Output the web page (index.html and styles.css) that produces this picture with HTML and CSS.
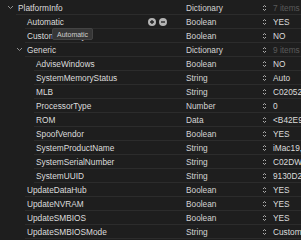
FILE: index.html
```html
<!DOCTYPE html>
<html>
<head>
<meta charset="utf-8">
<link rel="stylesheet" href="styles.css">
</head>
<body>
<div class="outline">
  <div class="row l0">
    <div class="key"><svg class="twist" width="7" height="5" viewBox="0 0 7 5"><path d="M1 1 L3.5 3.5 L6 1" fill="none" stroke="#8e8e8e" stroke-width="1"/></svg><span>PlatformInfo</span></div>
    <div class="type">Dictionary</div>
    <div class="val"><svg class="step" width="5" height="8" viewBox="0 0 5 8"><path d="M1 3 L2.5 1.5 L4 3 M1 5 L2.5 6.5 L4 5" fill="none" stroke="#b0b0b0" stroke-width="1"/></svg><span class="dim">7 items</span></div>
  </div>
  <div class="row l1">
    <div class="key"><span>Automatic</span>
      <span class="btns">
        <svg width="8" height="8" viewBox="0 0 8 8"><circle cx="4" cy="4" r="4" fill="#b4b4b4"/><path d="M2 4 H6 M4 2 V6" stroke="#1e1e1e" stroke-width="1.3"/></svg>
        <svg width="8" height="8" viewBox="0 0 8 8"><circle cx="4" cy="4" r="4" fill="#b4b4b4"/><path d="M2 4 H6" stroke="#1e1e1e" stroke-width="1.3"/></svg>
      </span>
    </div>
    <div class="type">Boolean</div>
    <div class="val"><svg class="step" width="5" height="8" viewBox="0 0 5 8"><path d="M1 3 L2.5 1.5 L4 3 M1 5 L2.5 6.5 L4 5" fill="none" stroke="#b0b0b0" stroke-width="1"/></svg><span>YES</span></div>
  </div>
  <div class="row l1">
    <div class="key"><span>CustomMemory</span></div>
    <div class="type">Boolean</div>
    <div class="val"><svg class="step" width="5" height="8" viewBox="0 0 5 8"><path d="M1 3 L2.5 1.5 L4 3 M1 5 L2.5 6.5 L4 5" fill="none" stroke="#b0b0b0" stroke-width="1"/></svg><span>NO</span></div>
  </div>
  <div class="row l1">
    <div class="key"><svg class="twist" width="7" height="5" viewBox="0 0 7 5"><path d="M1 1 L3.5 3.5 L6 1" fill="none" stroke="#8e8e8e" stroke-width="1"/></svg><span>Generic</span></div>
    <div class="type">Dictionary</div>
    <div class="val"><svg class="step" width="5" height="8" viewBox="0 0 5 8"><path d="M1 3 L2.5 1.5 L4 3 M1 5 L2.5 6.5 L4 5" fill="none" stroke="#b0b0b0" stroke-width="1"/></svg><span class="dim">9 items</span></div>
  </div>
  <div class="row l2">
    <div class="key"><span>AdviseWindows</span></div>
    <div class="type">Boolean</div>
    <div class="val"><svg class="step" width="5" height="8" viewBox="0 0 5 8"><path d="M1 3 L2.5 1.5 L4 3 M1 5 L2.5 6.5 L4 5" fill="none" stroke="#b0b0b0" stroke-width="1"/></svg><span>NO</span></div>
  </div>
  <div class="row l2">
    <div class="key"><span>SystemMemoryStatus</span></div>
    <div class="type">String</div>
    <div class="val"><svg class="step" width="5" height="8" viewBox="0 0 5 8"><path d="M1 3 L2.5 1.5 L4 3 M1 5 L2.5 6.5 L4 5" fill="none" stroke="#b0b0b0" stroke-width="1"/></svg><span>Auto</span></div>
  </div>
  <div class="row l2">
    <div class="key"><span>MLB</span></div>
    <div class="type">String</div>
    <div class="val"><svg class="step" width="5" height="8" viewBox="0 0 5 8"><path d="M1 3 L2.5 1.5 L4 3 M1 5 L2.5 6.5 L4 5" fill="none" stroke="#b0b0b0" stroke-width="1"/></svg><span>C02052100J9LC0WUE</span></div>
  </div>
  <div class="row l2">
    <div class="key"><span>ProcessorType</span></div>
    <div class="type">Number</div>
    <div class="val"><svg class="step" width="5" height="8" viewBox="0 0 5 8"><path d="M1 3 L2.5 1.5 L4 3 M1 5 L2.5 6.5 L4 5" fill="none" stroke="#b0b0b0" stroke-width="1"/></svg><span>0</span></div>
  </div>
  <div class="row l2">
    <div class="key"><span>ROM</span></div>
    <div class="type">Data</div>
    <div class="val"><svg class="step" width="5" height="8" viewBox="0 0 5 8"><path d="M1 3 L2.5 1.5 L4 3 M1 5 L2.5 6.5 L4 5" fill="none" stroke="#b0b0b0" stroke-width="1"/></svg><span>&lt;B42E9A3C 1B2F&gt;</span></div>
  </div>
  <div class="row l2">
    <div class="key"><span>SpoofVendor</span></div>
    <div class="type">Boolean</div>
    <div class="val"><svg class="step" width="5" height="8" viewBox="0 0 5 8"><path d="M1 3 L2.5 1.5 L4 3 M1 5 L2.5 6.5 L4 5" fill="none" stroke="#b0b0b0" stroke-width="1"/></svg><span>YES</span></div>
  </div>
  <div class="row l2">
    <div class="key"><span>SystemProductName</span></div>
    <div class="type">String</div>
    <div class="val"><svg class="step" width="5" height="8" viewBox="0 0 5 8"><path d="M1 3 L2.5 1.5 L4 3 M1 5 L2.5 6.5 L4 5" fill="none" stroke="#b0b0b0" stroke-width="1"/></svg><span>iMac19,1</span></div>
  </div>
  <div class="row l2">
    <div class="key"><span>SystemSerialNumber</span></div>
    <div class="type">String</div>
    <div class="val"><svg class="step" width="5" height="8" viewBox="0 0 5 8"><path d="M1 3 L2.5 1.5 L4 3 M1 5 L2.5 6.5 L4 5" fill="none" stroke="#b0b0b0" stroke-width="1"/></svg><span>C02DW0AVJV40</span></div>
  </div>
  <div class="row l2">
    <div class="key"><span>SystemUUID</span></div>
    <div class="type">String</div>
    <div class="val"><svg class="step" width="5" height="8" viewBox="0 0 5 8"><path d="M1 3 L2.5 1.5 L4 3 M1 5 L2.5 6.5 L4 5" fill="none" stroke="#b0b0b0" stroke-width="1"/></svg><span>9130D2E0-5A4B</span></div>
  </div>
  <div class="row l1">
    <div class="key"><span>UpdateDataHub</span></div>
    <div class="type">Boolean</div>
    <div class="val"><svg class="step" width="5" height="8" viewBox="0 0 5 8"><path d="M1 3 L2.5 1.5 L4 3 M1 5 L2.5 6.5 L4 5" fill="none" stroke="#b0b0b0" stroke-width="1"/></svg><span>YES</span></div>
  </div>
  <div class="row l1">
    <div class="key"><span>UpdateNVRAM</span></div>
    <div class="type">Boolean</div>
    <div class="val"><svg class="step" width="5" height="8" viewBox="0 0 5 8"><path d="M1 3 L2.5 1.5 L4 3 M1 5 L2.5 6.5 L4 5" fill="none" stroke="#b0b0b0" stroke-width="1"/></svg><span>YES</span></div>
  </div>
  <div class="row l1">
    <div class="key"><span>UpdateSMBIOS</span></div>
    <div class="type">Boolean</div>
    <div class="val"><svg class="step" width="5" height="8" viewBox="0 0 5 8"><path d="M1 3 L2.5 1.5 L4 3 M1 5 L2.5 6.5 L4 5" fill="none" stroke="#b0b0b0" stroke-width="1"/></svg><span>YES</span></div>
  </div>
  <div class="row l1">
    <div class="key"><span>UpdateSMBIOSMode</span></div>
    <div class="type">String</div>
    <div class="val"><svg class="step" width="5" height="8" viewBox="0 0 5 8"><path d="M1 3 L2.5 1.5 L4 3 M1 5 L2.5 6.5 L4 5" fill="none" stroke="#b0b0b0" stroke-width="1"/></svg><span>Custom</span></div>
  </div>
  <div class="tooltip">Automatic</div>
</div>
</body>
</html>
```
FILE: styles.css
```css
html, body {
  margin: 0;
  padding: 0;
  background: #1e1e1e;
  overflow: hidden;
}
body {
  width: 301px;
  height: 240px;
  font-family: "Liberation Sans", Arial, sans-serif;
  font-size: 8.3px;
  color: #dcdcdc;
}
.outline {
  position: relative;
  width: 350px;
  padding-top: 1px;
}
.row {
  display: grid;
  grid-template-columns: 1fr 77px 87px;
  height: 13px;
  border-bottom: 1px solid #2c2c2c;
  align-items: center;
  white-space: nowrap;
}
.l0 { margin-left: 16px; }
.l1 { margin-left: 25px; }
.l2 { margin-left: 34px; }
.key {
  display: flex;
  align-items: center;
  padding-left: 2px;
  min-width: 0;
}
.twist {
  flex: none;
  margin-left: -11px;
  margin-right: 4px;
}
.btns {
  display: flex;
  gap: 3px;
  margin-left: auto;
  margin-right: 19px;
}
.type {
  color: #d4d4d4;
}
.val {
  display: flex;
  align-items: center;
  gap: 6px;
  margin-left: -1px;
}
.step { flex: none; }
.dim { color: #5a5a5a; }
.tooltip {
  position: absolute;
  left: 52px;
  top: 28px;
  height: 12px;
  line-height: 12px;
  padding: 0 4px;
  background: #363636;
  border: 1px solid #444;
  border-radius: 2px;
  color: #cfcfcf;
  font-size: 7px;
  box-sizing: border-box;
}
```
